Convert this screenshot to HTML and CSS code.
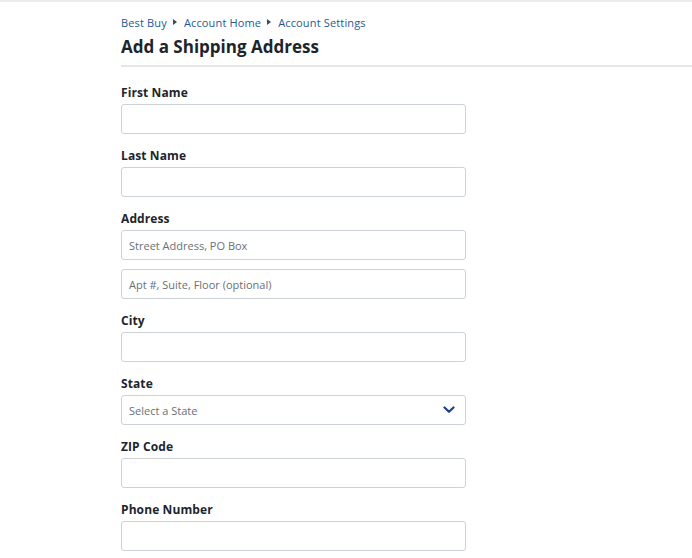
FILE: index.html
```html
<!DOCTYPE html>
<html>
<head>
<meta charset="utf-8">
<link rel="stylesheet" href="styles.css">
</head>
<body>
<div class="topbar"></div>
<div class="page">
  <nav class="crumbs">
    <a>Best Buy</a><span class="tri"></span><a>Account Home</a><span class="tri"></span><a>Account Settings</a>
  </nav>
  <h1 class="title">Add a Shipping Address</h1>
  <div class="divider"></div>
  <form class="form">
    <div class="field">
      <label class="label">First Name</label>
      <div class="input"></div>
    </div>
    <div class="field">
      <label class="label">Last Name</label>
      <div class="input"></div>
    </div>
    <div class="field">
      <label class="label">Address</label>
      <div class="input"><span class="ph">Street Address, PO Box</span></div>
      <div class="input second"><span class="ph">Apt #, Suite, Floor (optional)</span></div>
    </div>
    <div class="field">
      <label class="label">City</label>
      <div class="input"></div>
    </div>
    <div class="field">
      <label class="label">State</label>
      <div class="input select"><span class="ph">Select a State</span>
        <svg class="chev" width="12" height="8" viewBox="0 0 12 8"><path d="M1.5 1.5 L6 5.8 L10.5 1.5" fill="none" stroke="#1d3f8c" stroke-width="2.2" stroke-linecap="round" stroke-linejoin="round"/></svg>
      </div>
    </div>
    <div class="field">
      <label class="label">ZIP Code</label>
      <div class="input"></div>
    </div>
    <div class="field">
      <label class="label">Phone Number</label>
      <div class="input"></div>
    </div>
  </form>
</div>
</body>
</html>
```
FILE: styles.css
```css
html, body {
  margin: 0;
  padding: 0;
  background: #fff;
  font-family: "Open Sans", "Liberation Sans", sans-serif;
  color: #1d252c;
}
.topbar {
  height: 2px;
  background: #ebebee;
}
.page {
  padding-left: 121px;
}
.crumbs {
  display: flex;
  align-items: center;
  height: 16px;
  margin-top: 12px;
  font-size: 11px;
  letter-spacing: 0.15px;
  color: #1d5a94;
}
.crumbs a {
  color: #1d5a94;
}
.tri {
  width: 0;
  height: 0;
  border-top: 3px solid transparent;
  border-bottom: 3px solid transparent;
  border-left: 4px solid #3a4a5a;
  margin: 0 7px 0 6px;
}
.title {
  margin: 6px 0 0;
  font-size: 17px;
  line-height: 22px;
  font-weight: 700;
  color: #1d252c;
}
.divider {
  height: 2px;
  background: #e6e6e6;
  margin-top: 7px;
}
.form {
  display: flex;
  flex-direction: column;
  gap: 14px;
  margin-top: 18px;
}
.field {
  display: flex;
  flex-direction: column;
}
.label {
  font-size: 12px;
  line-height: 16px;
  font-weight: 700;
  margin-bottom: 3px;
  letter-spacing: 0.1px;
  color: #1d252c;
}
.input {
  width: 336px;
  height: 28px;
  border: 1px solid #cdd1d8;
  border-radius: 3px;
  display: flex;
  align-items: center;
  padding-left: 7px;
  box-sizing: content-box;
}
.second {
  margin-top: 9px;
}
.ph {
  font-size: 11px;
  color: #6b6f75;
}
.select {
  justify-content: space-between;
}
.chev {
  margin-right: 10px;
}
```
